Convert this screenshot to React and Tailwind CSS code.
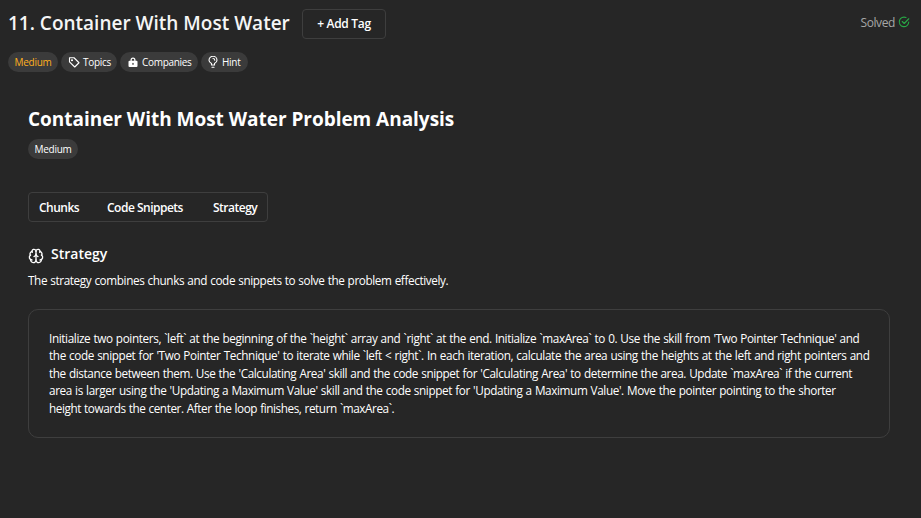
import { Brain } from "lucide-react";

const pill =
  "flex h-5 items-center rounded-full bg-[#3b3b3b] text-[10px] leading-[18px] font-medium tracking-[-0.3px] whitespace-nowrap pb-px";

const lines = [
  ["Initialize two pointers, `left` at the beginning of the `height` array and `right` at the end. Initialize `maxArea` to 0. Use the skill from 'Two Pointer Technique' and", "tracking-[-0.385px]"],
  ["the code snippet for 'Two Pointer Technique' to iterate while `left < right`. In each iteration, calculate the area using the heights at the left and right pointers and", "tracking-[-0.382px]"],
  ["the distance between them. Use the 'Calculating Area' skill and the code snippet for 'Calculating Area' to determine the area. Update `maxArea` if the current", "tracking-[-0.398px]"],
  ["area is larger using the 'Updating a Maximum Value' skill and the code snippet for 'Updating a Maximum Value'. Move the pointer pointing to the shorter", "tracking-[-0.384px]"],
  ["height towards the center. After the loop finishes, return `maxArea`.", "tracking-[-0.43px]"],
];

function TagIcon() {
  return (
    <svg className="size-3" viewBox="0 0 24 24" fill="none" stroke="currentColor" strokeWidth="2.2" strokeLinejoin="round">
      <path d="M3 3.5h9L22 13.5 13.5 22 3 11.8Z" />
      <circle cx="8" cy="8.5" r="1" fill="currentColor" />
    </svg>
  );
}

function LockIcon() {
  return (
    <svg className="size-3" viewBox="0 0 24 24" fill="currentColor">
      <path fillRule="evenodd" d="M7 9.500V8a5 5 0 0 1 10 0v1.500h2a2 2 0 0 1 2 2V20a2 2 0 0 1-2 2H5a2 2 0 0 1-2-2v-8.500a2 2 0 0 1 2-2Zm2.500 0h5V8a2.500 2.500 0 0 0-5 0Zm2.500 4a1.500 1.500 0 0 0-1 2.600V18h2v-1.900a1.500 1.500 0 0 0-1-2.600Z" />
    </svg>
  );
}

function HintIcon() {
  return (
    <svg className="h-3 w-3" viewBox="0 0 24 24" fill="none" stroke="currentColor" strokeWidth="2.2" strokeLinecap="round">
      <path d="M9 18v-3C6 13.500 4 11.500 4 8.500a8 8 0 0 1 16 0c0 3-2 5-5 6.500v3Z" />
      <path d="M12 5a3.500 3.500 0 0 1 3.500 3.500M10 22.500h4" />
    </svg>
  );
}

function SolvedIcon() {
  return (
    <svg className="size-3" viewBox="0 0 24 24" fill="none" stroke="currentColor" strokeWidth="2.2" strokeLinecap="round" strokeLinejoin="round">
      <path d="M16 3.200A9.500 9.500 0 1 0 21.500 12M8.500 11l4 4L21.500 5.500" />
    </svg>
  );
}

export default function App() {
  return (
    <div className="h-[518px] w-[921px] overflow-hidden bg-[#262626] pl-2 font-['Open_Sans','Noto_Sans',sans-serif] text-white">
      <header className="flex items-center pt-[9px] pr-[11px]">
        <h1 className="-mt-0.5 w-[294px] text-[19px] leading-[28px] font-semibold whitespace-nowrap text-[#f5f5f5]">11. Container With Most Water</h1>
        <button className="h-[30px] w-[84px] rounded border border-[#3e3e3e] text-[12px] font-semibold tracking-[-0.3px]">+ Add Tag</button>
        <div className="ml-auto flex items-center gap-[3px] text-[12px] text-[#a6a6a6]">
          <span className="-mt-0.5 tracking-[-0.4px]">Solved</span>
          <span className="-mt-1 text-[#28a745]"><SolvedIcon /></span>
        </div>
      </header>

      <div className="mt-[13px] flex gap-[3px]">
        <span className={`${pill} w-[50px] justify-center text-[#ffb020]`}>Medium</span>
        <span className={`${pill} w-[56px] gap-[3px] pl-[7px]`}><TagIcon />Topics</span>
        <span className={`${pill} w-[78px] gap-[3px] pl-[7px]`}><LockIcon />Companies</span>
        <span className={`${pill} w-[47px] gap-[3px] pl-1.5`}><HintIcon />Hint</span>
      </div>

      <main className="w-[882px] pt-[33px] pl-5">
        <h2 className="text-[19px] leading-[28px] font-bold tracking-[-0.03px] whitespace-nowrap">Container With Most Water Problem Analysis</h2>
        <span className={`${pill} mt-[6px] w-[50px] justify-center`}>Medium</span>

        <nav className="mt-[33px] flex h-[30px] w-[240px] items-center rounded border border-[#3e3e3e] pt-0.5 pl-[10px] text-[12px] font-semibold tracking-[-0.5px] whitespace-nowrap">
          <span className="w-[68px]">Chunks</span>
          <span className="w-[106px]">Code Snippets</span>
          <span>Strategy</span>
        </nav>

        <section className="mt-[21px]">
          <h3 className="flex h-[24px] items-start gap-[7px] text-[14px] leading-[22px] font-semibold">
            <Brain className="mt-[5px] size-4" strokeWidth={2} />
            <span>Strategy</span>
          </h3>
          <p className="mt-[5px] text-[11.75px] leading-[17.5px] tracking-[-0.397px] whitespace-nowrap [word-spacing:0.5px]">The strategy combines chunks and code snippets to solve the problem effectively.</p>
        </section>

        <div className="mt-[19px] h-[129px] rounded-[10px] border border-[#3e3e3e] px-5 pt-5 text-[11.75px] leading-[17.5px] [word-spacing:0.5px]">
          {lines.map(([text, tracking]) => (
            <p key={text} className={`whitespace-nowrap ${tracking}`}>{text}</p>
          ))}
        </div>
      </main>
    </div>
  );
}
